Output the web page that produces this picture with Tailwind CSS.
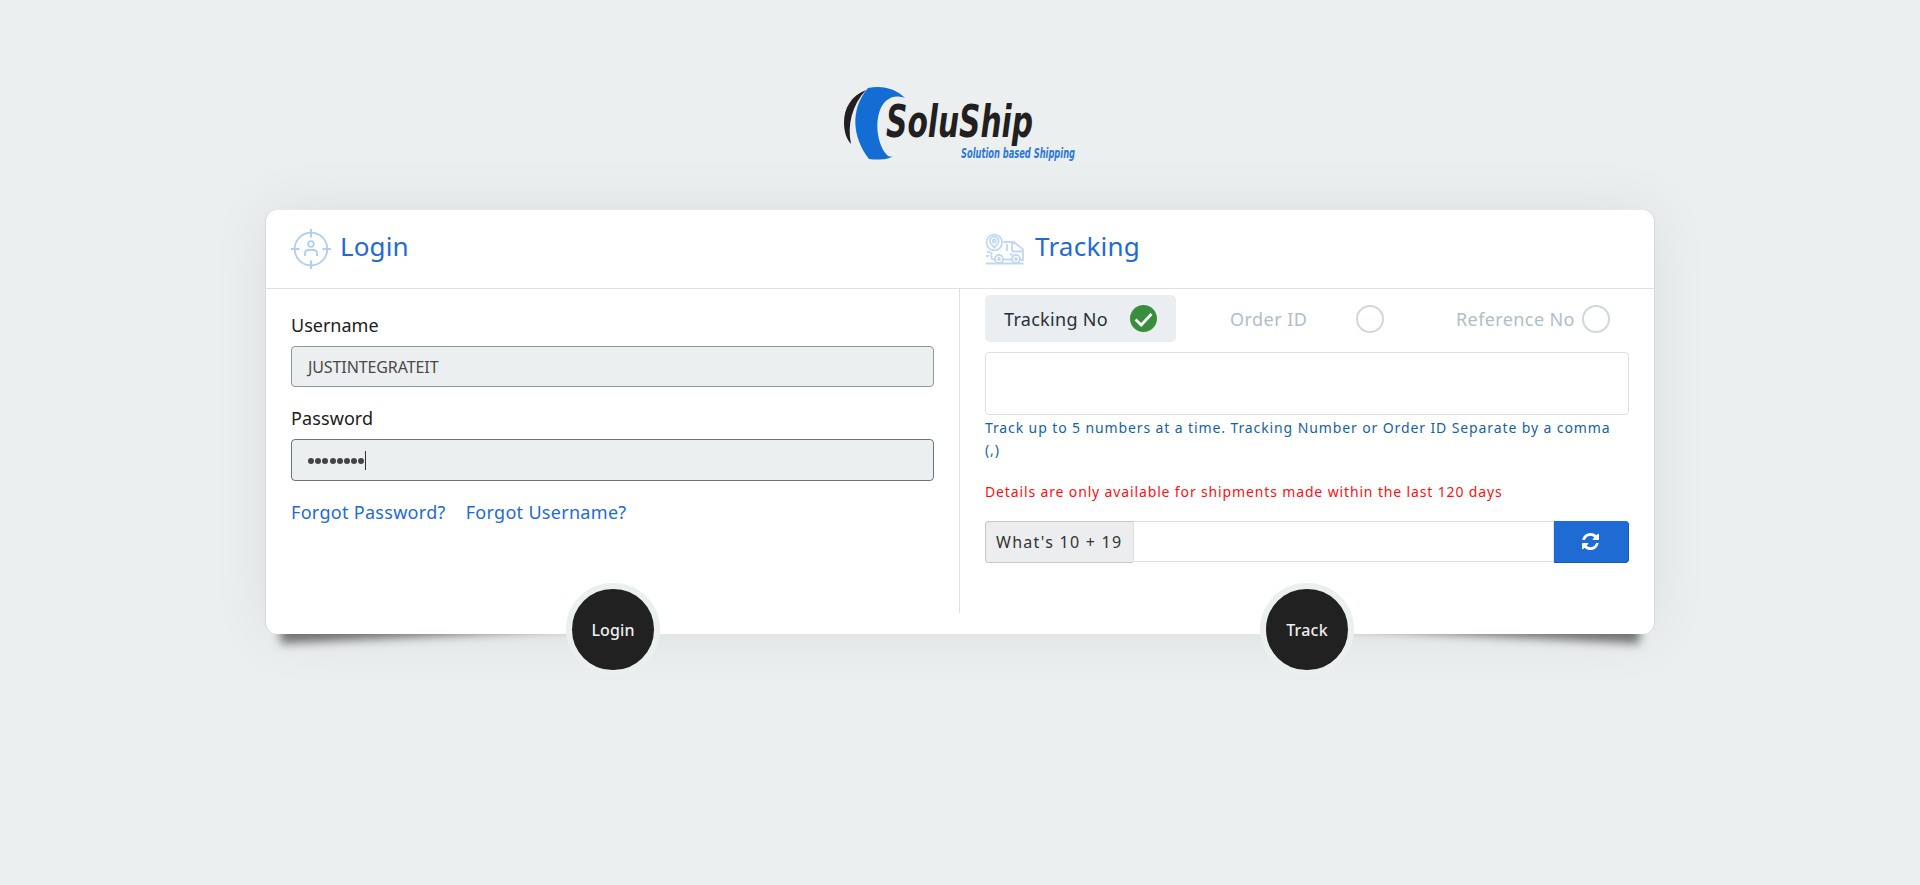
<!DOCTYPE html>
<html lang="en">
<head>
<meta charset="utf-8">
<title>SoluShip</title>
<script src="https://cdn.jsdelivr.net/npm/@tailwindcss/browser@4"></script>
</head>
<body class="h-[885px] overflow-hidden bg-[#ebeff0] font-['Tahoma','Noto_Sans',sans-serif] text-[#212121]">
<div class="flex flex-col items-center pt-[80px]">
  <svg class="block h-[88px] w-[240px] overflow-visible" viewBox="840 80 240 88" role="img" aria-label="SoluShip">
    <path d="M866 90C851 96 844 108 844 123C844 132 847 140 851 144C847 125 852 105 866 90Z" fill="#231f20"/>
    <path d="M868 88C883 85 896 89 905 98C894 94 885 98 880 110C874 126 879 147 887 155C889 157 891 157 893 156C888 160 878 160 869 159C852 137 850 109 868 88Z" fill="#146dd4"/>
    <text x="886" y="137" textLength="147" lengthAdjust="spacingAndGlyphs" font-family="DejaVu Sans Condensed, DejaVu Sans" font-stretch="condensed" font-weight="700" font-style="italic" font-size="45" fill="#231f20">SoluShip</text>
    <text x="961" y="158" textLength="114" lengthAdjust="spacingAndGlyphs" font-family="DejaVu Sans Condensed, DejaVu Sans" font-stretch="condensed" font-weight="700" font-style="italic" font-size="13.500" fill="#2a79d8">Solution based Shipping</text>
  </svg>

  <main class="relative mt-[42px] h-[424px] w-[1390px]">
    <div class="absolute bottom-[13px] left-[13px] h-[70px] w-[50%] max-w-[300px] -rotate-3 shadow-[0_15px_10px_#777]"></div>
    <div class="absolute right-[13px] bottom-[13px] h-[70px] w-[50%] max-w-[300px] rotate-3 shadow-[0_15px_10px_#777]"></div>
    <div class="relative flex h-full flex-col rounded-[12px] border-x border-[#d4d9d9] bg-white shadow-[0_0_60px_rgba(0,0,0,0.07)]">
      <header class="grid h-[79px] shrink-0 grid-cols-2 border-b border-[#e0e0e0] text-[26px] text-[#1e6cd3]">
        <div class="flex items-start pt-[19px] pl-[25px]">
          <svg class="size-[40px]" viewBox="0 0 40 40" fill="none" stroke="#b0cdf2" stroke-width="1.8"><circle cx="20" cy="20" r="16.300"/><path d="M20 0V8.500M20 31.500V40M0 20H8.500M31.500 20H40" stroke-width="2.2"/><circle cx="20" cy="15" r="2.800"/><path d="M14 27V24.500Q14 21 17.500 21H22.500Q26 21 26 24.500V27"/></svg>
          <h1 class="mt-[-1px] ml-[9px] leading-[36px] tracking-[0.1px]">Login</h1>
        </div>
        <div class="flex items-start pt-[19px] pl-[25px]">
          <svg class="mt-[4px] h-[32px] w-[40px]" viewBox="0 0 40 32" fill="none" stroke="#c0d8f5" stroke-width="1.8"><circle cx="9.300" cy="9.500" r="7.800"/><path d="M9.300 14.500Q5 10.500 5 8A4.300 4.300 0 0 1 13.600 8Q13.600 10.500 9.300 14.500Z"/><circle cx="9.300" cy="8" r="1.500"/><path d="M18.500 9H29L38 16.500V27H35.500M22 11V18M29.500 10.500H27V16.500Q27 18.500 29 18.500H38M6.500 19V25Q6.500 26.500 9.500 26.500M18.500 26.500H26.500M1 30.500H38.500M2 19H5M1 23H4M25 21.500H28"/><circle cx="14" cy="26" r="4"/><circle cx="31" cy="26" r="4"/><circle cx="14" cy="26" r="1"/><circle cx="31" cy="26" r="1"/></svg>
          <h1 class="mt-[-1px] ml-[10px] leading-[36px] tracking-[0.25px]">Tracking</h1>
        </div>
      </header>

      <div class="grid h-[324px] grid-cols-2">
        <section class="border-r border-[#e0e0e0] pr-[25px] pl-[25px] pt-[24px]">
          <label class="block h-[33px] text-[18px] leading-[24px] tracking-[0px]">Username</label>
          <div class="flex h-[41px] items-center rounded-[4px] border border-[#90979b] bg-[#ebeff0] pl-[16px] text-[16px] tracking-[-0.1px] text-[#494949]">JUSTINTEGRATEIT</div>
          <label class="mt-[19px] block h-[33px] text-[18px] leading-[24px] tracking-[0.1px]">Password</label>
          <div class="flex h-[42px] items-center rounded-[4px] border border-[#6b757d] bg-[#ebeff0] pl-[16px] pt-[2px]">
            <div class="flex items-center gap-[1.200px]" aria-label="password">
              <i class="size-[6px] rounded-full bg-[#444]"></i><i class="size-[6px] rounded-full bg-[#444]"></i><i class="size-[6px] rounded-full bg-[#444]"></i><i class="size-[6px] rounded-full bg-[#444]"></i><i class="size-[6px] rounded-full bg-[#444]"></i><i class="size-[6px] rounded-full bg-[#444]"></i><i class="size-[6px] rounded-full bg-[#444]"></i><i class="size-[6px] rounded-full bg-[#444]"></i>
            </div>
            <i class="mb-[2px] ml-[1px] h-[19px] w-px bg-[#333]"></i>
          </div>
          <div class="mt-[19px] flex gap-[20px] text-[18px] leading-[24px] tracking-[0.3px] text-[#1e6cd3]"><a>Forgot Password?</a><a>Forgot Username?</a></div>
        </section>

        <section class="pt-[6px] pr-[25px] pl-[25px]">
          <div class="flex h-[47px] text-[18px]">
            <div class="flex w-[191px] items-center rounded-[5px] bg-[#eaeef1] pl-[19px] text-[#263238]">
              <span class="w-[126px] pt-[2px] tracking-[0.3px]">Tracking No</span>
              <svg class="size-[27px]" viewBox="0 0 27 27"><circle cx="13.500" cy="13.500" r="13.500" fill="#388e3c"/><path d="M5.500 14.500L11.200 20L21.500 9" fill="none" stroke="white" stroke-width="2.700"/></svg>
            </div>
            <div class="flex items-center pl-[54px] text-[#b0bec5]"><span class="w-[126px] pt-[2px] tracking-[0.45px]">Order ID</span><i class="size-[28px] rounded-full border-2 border-[#d1d7de]"></i></div>
            <div class="flex items-center pl-[72px] text-[#b0bec5]"><span class="w-[126px] pt-[2px] whitespace-nowrap tracking-[0.4px]">Reference No</span><i class="size-[28px] rounded-full border-2 border-[#d1d7de]"></i></div>
          </div>
          <div class="mt-[10px] h-[63px] rounded-[4px] border border-[#e0e0e0]"></div>
          <p class="mt-[2px] text-[14px] leading-[22px] tracking-[0.89px] text-[#1663a3]">Track up to 5 numbers at a time. Tracking Number or Order ID Separate by a comma<br>(,)</p>
          <p class="mt-[20px] text-[14px] leading-[22px] tracking-[0.86px] text-[#ff1010]">Details are only available for shipments made within the last 120 days</p>
          <div class="mt-[18px] flex h-[42px]">
            <div class="flex w-[148px] items-center whitespace-nowrap rounded-l-[4px] border border-r-0 border-[#c5c8ca] bg-[#ecedef] pl-[10px] text-[16px] tracking-[1.25px] text-[#333]">What's 10 + 19</div>
            <div class="h-[41px] flex-1 border border-[#e0e0e0]"></div>
            <div class="flex w-[75px] items-center justify-center rounded-r-[4px] border-r border-b border-[#195cb2] bg-[#1e6cd3]">
              <svg class="ml-[-2px] size-[17px]" viewBox="0 0 1536 1536" fill="white"><path d="M1511 928q0 5-1 7-64 268-268 434.500T764 1536q-146 0-282.500-55T238 1324l-129 129q-19 19-45 19t-45-19-19-45V960q0-26 19-45t45-19h448q26 0 45 19t19 45-19 45l-137 137q71 66 161 102t187 36q134 0 250-65t186-179q11-17 53-117 8-23 30-23h192q13 0 22.500 9.500t9.500 22.500zm25-800v448q0 26-19 45t-45 19h-448q-26 0-45-19t-19-45 19-45l138-138Q969 256 768 256q-134 0-250 65T332 500q-11 17-53 117-8 23-30 23H50q-13 0-22.500-9.500T18 608v-7q65-268 270-434.500T768 0q146 0 284 55.500T1297 212l130-129q19-19 45-19t45 19 19 45z"/></svg>
            </div>
          </div>
        </section>
      </div>

      <button class="absolute top-[373px] left-[300px] h-[93px] w-[94px] rounded-full border-[6px] border-[#ebeff0] bg-[#212121] text-[16px] font-medium tracking-[0.1px] text-[#eee]">Login</button>
      <button class="absolute top-[373px] left-[994px] h-[93px] w-[94px] rounded-full border-[6px] border-[#ebeff0] bg-[#212121] text-[16px] font-medium tracking-[0.2px] text-[#eee]">Track</button>
    </div>
  </main>
</div>
</body>
</html>
